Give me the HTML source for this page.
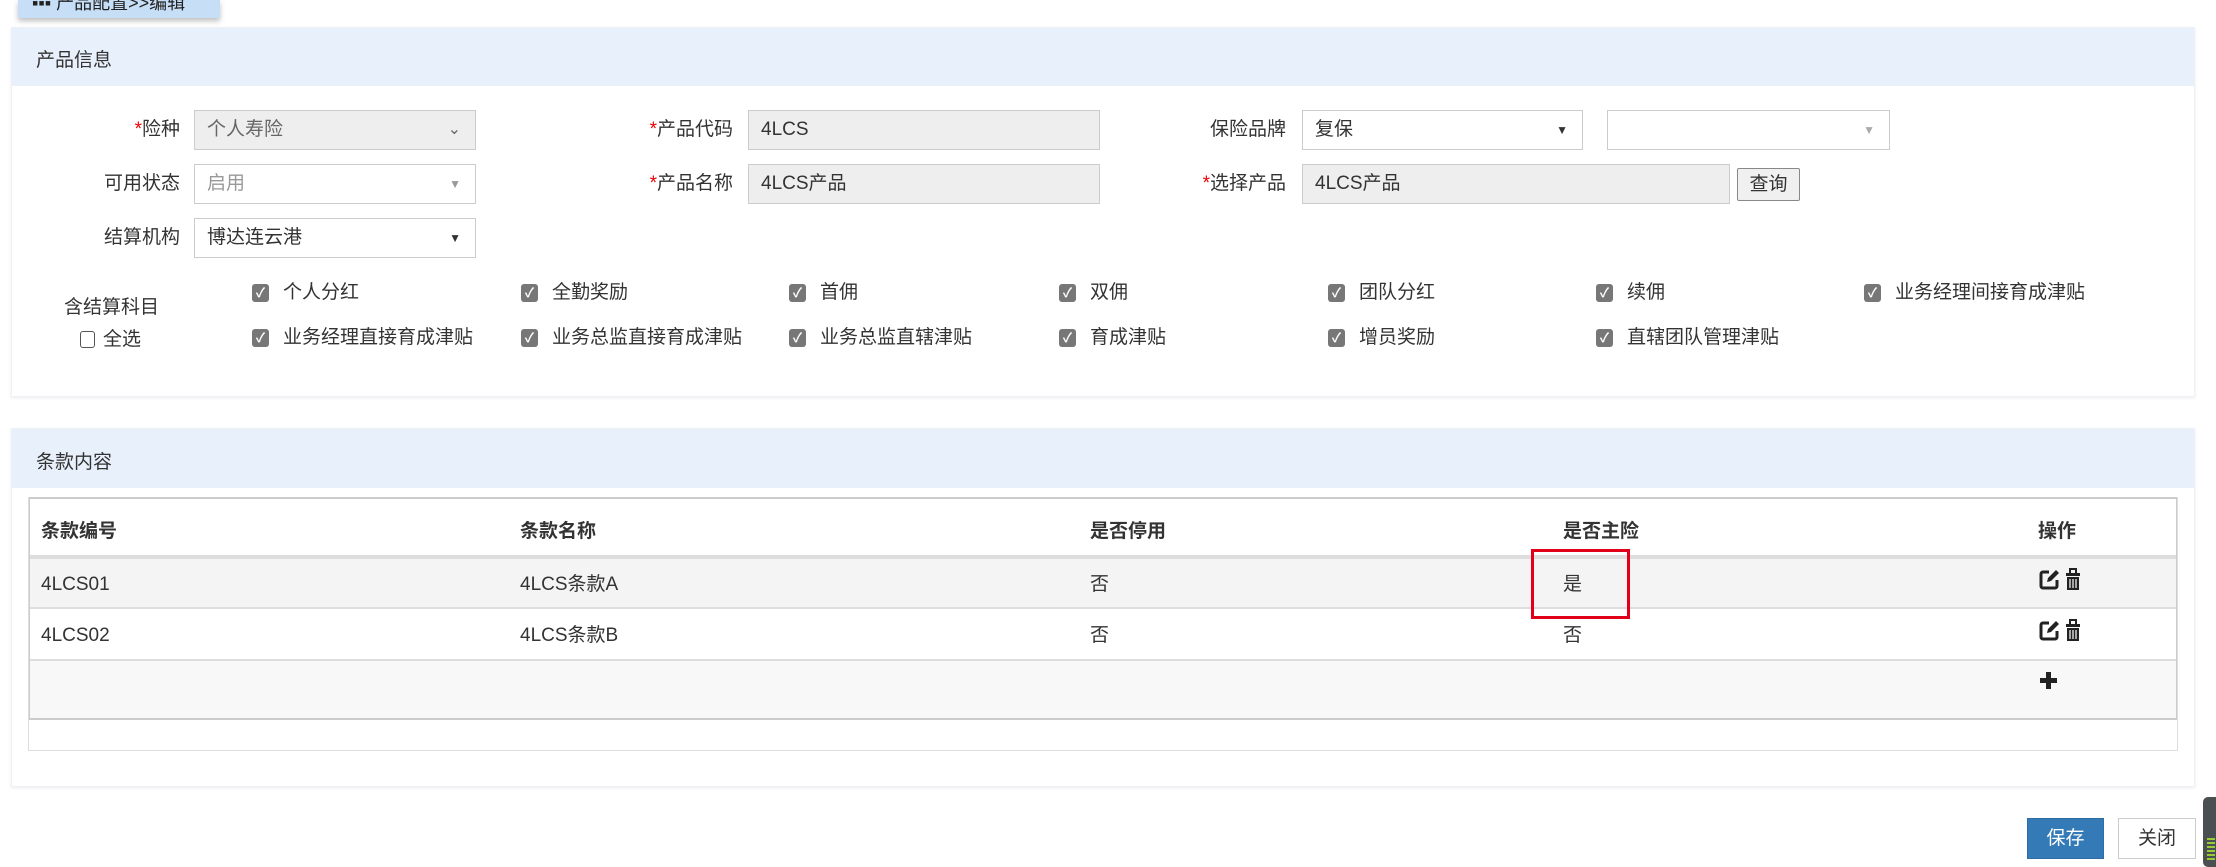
<!DOCTYPE html>
<html><head><meta charset="utf-8">
<style>
*{box-sizing:border-box;margin:0;padding:0}
body{width:2216px;height:861px;overflow:hidden;background:#fff;font-family:"Liberation Sans","Noto Sans CJK SC",sans-serif;font-size:19px;color:#333;position:relative}
.a{position:absolute}
.panel{position:absolute;left:11px;width:2184px;background:#fff;box-shadow:0 1px 3px rgba(0,0,0,.08);border:1px solid #eef2f6}
.ph{position:absolute;left:0;top:0;right:0;background:#e8f1fb}
.lbl{position:absolute;text-align:right;width:200px;line-height:40px;font-size:19px}
.lbl i{color:#e00;font-style:normal}
.inp{position:absolute;border:1px solid #ccc;height:40px;line-height:38px;padding-left:12px;font-size:19px}
.gray{background:#eee}
.arr{position:absolute;right:14px;top:0;font-size:12px}
.cb{position:absolute;width:17px;height:18px;background:#777;border-radius:3px;color:#fff;font-size:13px;line-height:18px;text-align:center;font-weight:bold}
.ct{position:absolute;font-size:19px;line-height:20px}
.th{position:absolute;font-weight:bold;font-size:19px;line-height:24px}
.td{position:absolute;font-size:19px;line-height:24px}
</style></head><body>
<div class="a" style="left:18px;top:0;width:202px;height:18px;background:#c6dff7;box-shadow:0 3px 5px rgba(0,0,0,.25);overflow:hidden"><span class="a" style="left:14px;top:-11px;font-size:18px;color:#222">▪▪▪ 产品配置>>编辑</span></div>

<div class="panel" style="top:27px;height:370px">
 <div class="ph" style="height:58px"><span class="a" style="left:24px;top:17px;font-size:19px">产品信息</span></div>
</div>
<div class="lbl" style="left:-20px;top:110px"><i>*</i>险种</div>
<div class="inp gray" style="left:194px;top:110px;width:282px;color:#666">个人寿险<span class="arr" style="font-size:16px">⌄</span></div>
<div class="lbl" style="left:533px;top:110px"><i>*</i>产品代码</div>
<div class="inp gray" style="left:748px;top:110px;width:352px">4LCS</div>
<div class="lbl" style="left:1086px;top:110px">保险品牌</div>
<div class="inp" style="left:1302px;top:110px;width:281px">复保<span class="arr">▼</span></div>
<div class="inp" style="left:1607px;top:110px;width:283px"><span class="arr" style="color:#aaa">▼</span></div>

<div class="lbl" style="left:-20px;top:164px">可用状态</div>
<div class="inp" style="left:194px;top:164px;width:282px;color:#999">启用<span class="arr" style="color:#999">▼</span></div>
<div class="lbl" style="left:533px;top:164px"><i>*</i>产品名称</div>
<div class="inp gray" style="left:748px;top:164px;width:352px">4LCS产品</div>
<div class="lbl" style="left:1086px;top:164px"><i>*</i>选择产品</div>
<div class="inp gray" style="left:1302px;top:164px;width:428px">4LCS产品</div>
<div class="a" style="left:1737px;top:168px;width:63px;height:33px;border:1px solid #888;border-radius:2px;background:#f0f0f0;text-align:center;line-height:31px;font-size:19px">查询</div>

<div class="lbl" style="left:-20px;top:218px">结算机构</div>
<div class="inp" style="left:194px;top:218px;width:282px">博达连云港<span class="arr">▼</span></div>

<div class="ct" style="left:64px;top:298px">含结算科目</div>
<div class="a" style="left:80px;top:331px;width:15px;height:17px;border:1px solid #555;border-radius:3px"></div>
<div class="ct" style="left:103px;top:330px">全选</div>

<div class="cb" style="left:252px;top:284px">✓</div><div class="ct" style="left:283px;top:283px">个人分红</div>
<div class="cb" style="left:521px;top:284px">✓</div><div class="ct" style="left:552px;top:283px">全勤奖励</div>
<div class="cb" style="left:789px;top:284px">✓</div><div class="ct" style="left:820px;top:283px">首佣</div>
<div class="cb" style="left:1059px;top:284px">✓</div><div class="ct" style="left:1090px;top:283px">双佣</div>
<div class="cb" style="left:1328px;top:284px">✓</div><div class="ct" style="left:1359px;top:283px">团队分红</div>
<div class="cb" style="left:1596px;top:284px">✓</div><div class="ct" style="left:1627px;top:283px">续佣</div>
<div class="cb" style="left:1864px;top:284px">✓</div><div class="ct" style="left:1895px;top:283px">业务经理间接育成津贴</div>

<div class="cb" style="left:252px;top:329px">✓</div><div class="ct" style="left:283px;top:328px">业务经理直接育成津贴</div>
<div class="cb" style="left:521px;top:329px">✓</div><div class="ct" style="left:552px;top:328px">业务总监直接育成津贴</div>
<div class="cb" style="left:789px;top:329px">✓</div><div class="ct" style="left:820px;top:328px">业务总监直辖津贴</div>
<div class="cb" style="left:1059px;top:329px">✓</div><div class="ct" style="left:1090px;top:328px">育成津贴</div>
<div class="cb" style="left:1328px;top:329px">✓</div><div class="ct" style="left:1359px;top:328px">增员奖励</div>
<div class="cb" style="left:1596px;top:329px">✓</div><div class="ct" style="left:1627px;top:328px">直辖团队管理津贴</div>

<div class="panel" style="top:428px;height:359px">
 <div class="ph" style="height:59px"><span class="a" style="left:24px;top:18px;font-size:19px">条款内容</span></div>
</div>
<div class="a" style="left:28px;top:497px;width:2150px;height:254px;border:1px solid #ddd"></div>
<div class="a" style="left:29px;top:497px;width:2148px;height:223px;border:1px solid #ccc;border-top-width:2px;border-bottom-width:2px"></div>
<div class="a" style="left:30px;top:555px;width:2146px;height:4px;background:#ddd"></div>
<div class="a" style="left:30px;top:559px;width:2146px;height:50px;background:#f4f4f4;border-bottom:2px solid #ddd"></div>
<div class="a" style="left:30px;top:659px;width:2146px;height:59px;background:#f8f8f8;border-top:2px solid #ddd"></div>

<div class="th" style="left:41px;top:520px">条款编号</div>
<div class="th" style="left:520px;top:520px">条款名称</div>
<div class="th" style="left:1090px;top:520px">是否停用</div>
<div class="th" style="left:1563px;top:520px">是否主险</div>
<div class="th" style="left:2038px;top:520px">操作</div>

<div class="td" style="left:41px;top:573px">4LCS01</div>
<div class="td" style="left:520px;top:573px">4LCS条款A</div>
<div class="td" style="left:1090px;top:573px">否</div>
<div class="td" style="left:1563px;top:573px">是</div>
<div class="td" style="left:41px;top:624px">4LCS02</div>
<div class="td" style="left:520px;top:624px">4LCS条款B</div>
<div class="td" style="left:1090px;top:624px">否</div>
<div class="td" style="left:1563px;top:624px">否</div>

<div class="a" style="left:1531px;top:549px;width:99px;height:70px;border:3px solid #e0001a"></div>

<svg class="a" style="left:2038px;top:568px" width="50" height="24" viewBox="0 0 50 24"><path d="M11 4H5a2 2 0 0 0-2 2v12a2 2 0 0 0 2 2h12a2 2 0 0 0 2-2v-6" fill="none" stroke="#222" stroke-width="3"/><path d="M9 14l1-4 8-8 3 3-8 8z" fill="#222"/><rect x="28" y="5" width="14" height="3" fill="#222"/><rect x="32" y="1" width="6" height="5" fill="none" stroke="#222" stroke-width="2"/><path d="M29 9h12v13H29z" fill="#222"/><path d="M32 11v9M35 11v9M38 11v9" stroke="#fff" stroke-width="1.2"/></svg>
<svg class="a" style="left:2038px;top:619px" width="50" height="24" viewBox="0 0 50 24"><path d="M11 4H5a2 2 0 0 0-2 2v12a2 2 0 0 0 2 2h12a2 2 0 0 0 2-2v-6" fill="none" stroke="#222" stroke-width="3"/><path d="M9 14l1-4 8-8 3 3-8 8z" fill="#222"/><rect x="28" y="5" width="14" height="3" fill="#222"/><rect x="32" y="1" width="6" height="5" fill="none" stroke="#222" stroke-width="2"/><path d="M29 9h12v13H29z" fill="#222"/><path d="M32 11v9M35 11v9M38 11v9" stroke="#fff" stroke-width="1.2"/></svg>
<svg class="a" style="left:2039px;top:671px" width="20" height="20" viewBox="0 0 20 20"><path d="M7 1h5v6h6v5h-6v6H7v-6H1V7h6z" fill="#222"/></svg>

<div class="a" style="left:2027px;top:818px;width:77px;height:41px;background:#337ab7;border:1px solid #2e6da4;color:#fff;text-align:center;line-height:39px;font-size:19px">保存</div>
<div class="a" style="left:2118px;top:818px;width:78px;height:41px;background:#fff;border:1px solid #ccc;text-align:center;line-height:39px;font-size:19px">关闭</div>
<div class="a" style="left:2203px;top:797px;width:20px;height:70px;background:#4a4f52;border-radius:5px"></div>
<div class="a" style="left:2207px;top:838px;width:8px;height:23px;background:repeating-linear-gradient(#9c3 0 2px,#4a4f52 2px 4px)"></div>
</body></html>
